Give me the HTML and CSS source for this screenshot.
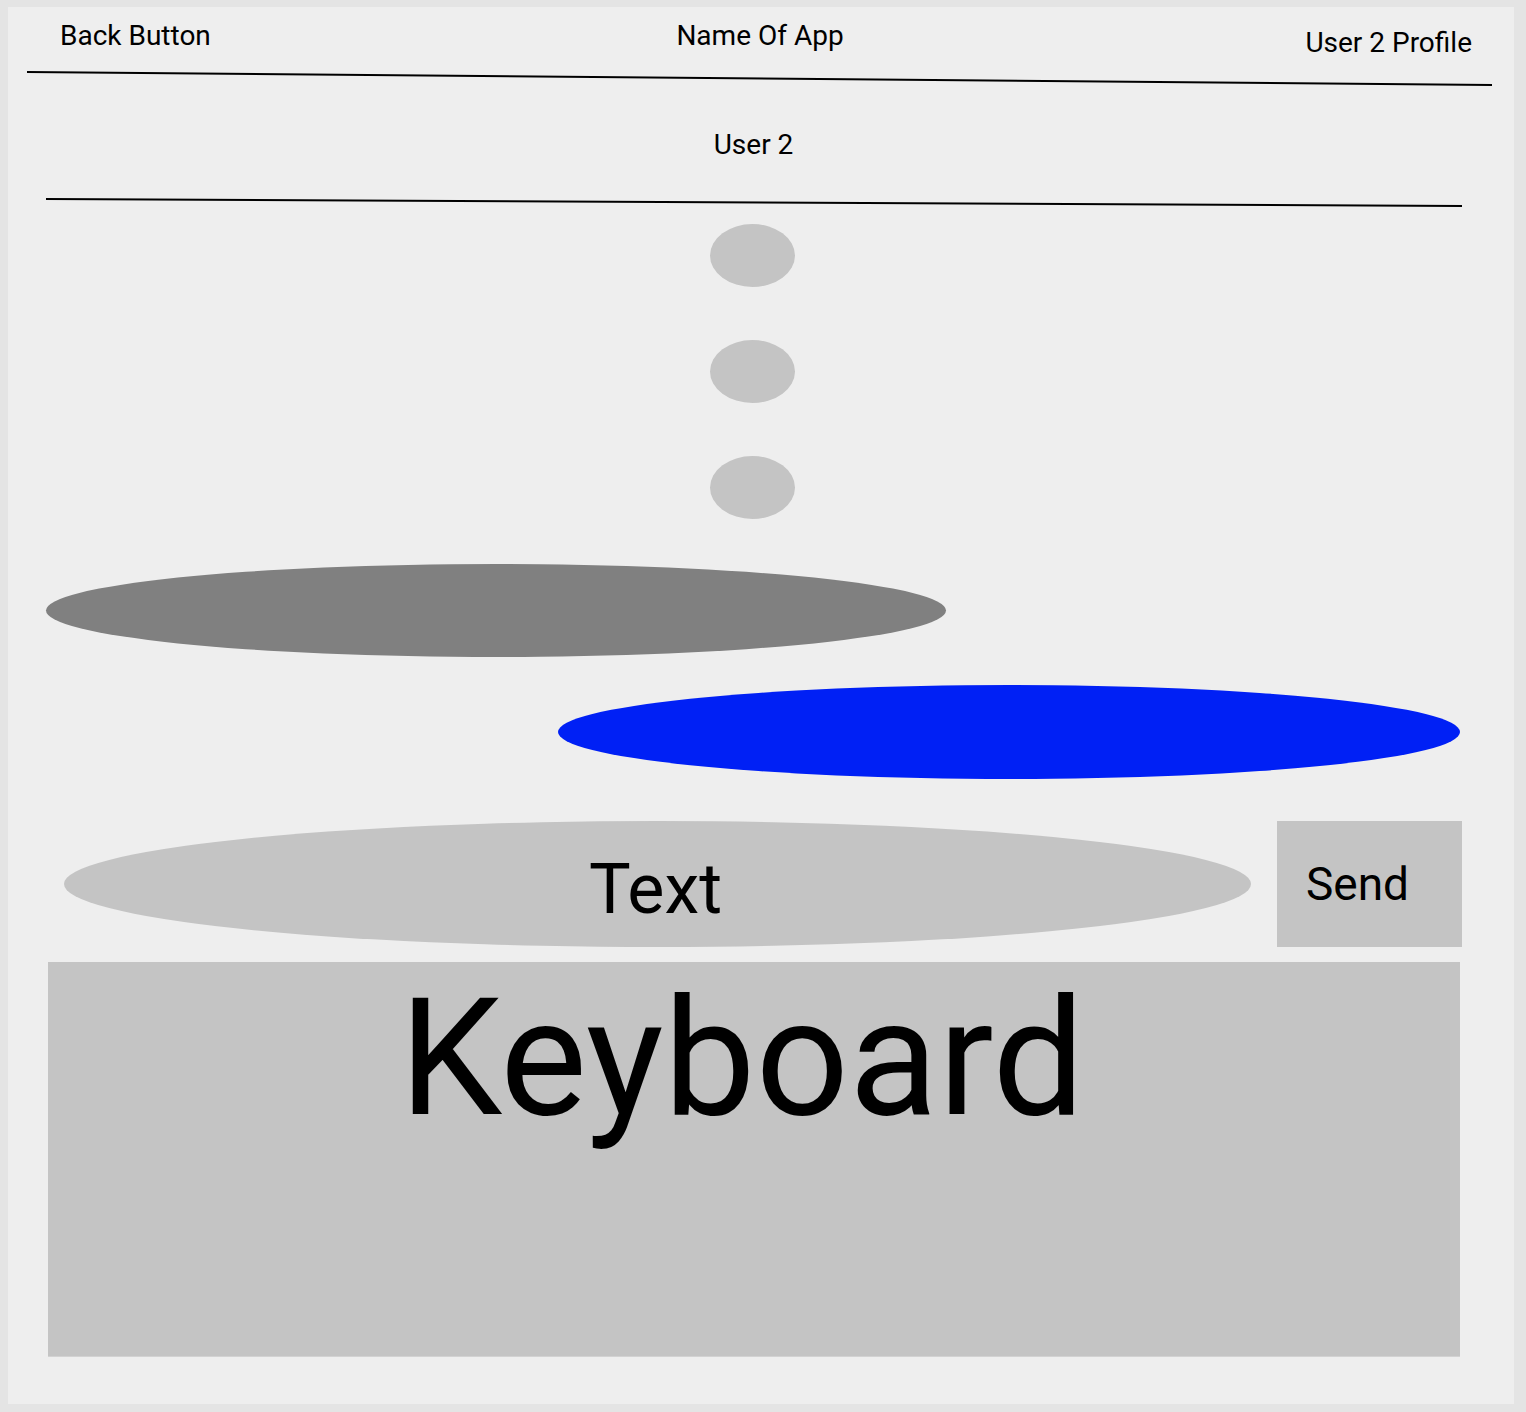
FILE: index.html
```html
<!DOCTYPE html>
<html lang="en">
<head>
<meta charset="utf-8">
<title>Chat Wireframe</title>
<link rel="stylesheet" href="styles.css">
</head>
<body>
<div class="panel">
  <header class="topbar">
    <span class="back">Back Button</span>
    <span class="title">Name Of App</span>
    <span class="profile">User 2 Profile</span>
  </header>
  <svg class="rule rule-top" width="1506" height="24" viewBox="0 0 1506 24">
    <line x1="19" y1="5" x2="1484" y2="18" stroke="#000" stroke-width="2"/>
  </svg>
  <div class="contact">User 2</div>
  <svg class="rule rule-contact" width="1506" height="20" viewBox="0 0 1506 20">
    <line x1="38" y1="6" x2="1454" y2="13" stroke="#000" stroke-width="2"/>
  </svg>
  <div class="dots">
    <div class="dot"></div>
    <div class="dot"></div>
    <div class="dot"></div>
  </div>
  <div class="bubble bubble-in"></div>
  <div class="bubble bubble-out"></div>
  <div class="composer">
    <div class="input"><span>Text</span></div>
    <div class="send">Send</div>
  </div>
  <div class="keyboard">Keyboard</div>
</div>
</body>
</html>
```

FILE: styles.css
```css
html, body {
  margin: 0;
  padding: 0;
  background: #e4e4e4;
}

body {
  width: 1526px;
  height: 1412px;
  overflow: hidden;
  font-family: Roboto, "Liberation Sans", Arial, sans-serif;
  color: #000;
}

.panel {
  margin: 7px 0 0 8px;
  width: 1506px;
  height: 1397px;
  background: #eeeeee;
  display: flex;
  flex-direction: column;
}

.topbar {
  display: grid;
  grid-template-columns: 1fr auto 1fr;
  align-items: start;
  padding: 12px 42px 0 52px;
  height: 48px;
  font-size: 28px;
  line-height: 33px;
}

.back {
  justify-self: start;
}

.title {
  justify-self: center;
  margin-right: 12px;
}

.profile {
  justify-self: end;
  margin-top: 7px;
}

.rule {
  display: block;
  flex: none;
}

.contact {
  margin-top: 37px;
  height: 33px;
  font-size: 28px;
  line-height: 33px;
  text-align: center;
  padding-right: 15px;
}

.rule-contact {
  margin-top: 32px;
}

.dots {
  display: flex;
  flex-direction: column;
  align-items: flex-start;
  gap: 53px;
  margin-top: 11px;
  padding-left: 702px;
}

.dot {
  width: 85px;
  height: 63px;
  border-radius: 50%;
  background: #c4c4c4;
}

.bubble {
  height: 93px;
  border-radius: 50%;
  flex: none;
}

.bubble-in {
  margin-top: 45px;
  margin-left: 38px;
  width: 900px;
  background: #808080;
}

.bubble-out {
  margin-top: 28px;
  margin-left: 550px;
  width: 902px;
  height: 94px;
  background: #0020f5;
}

.composer {
  display: flex;
  align-items: stretch;
  margin-top: 42px;
  margin-left: 56px;
  height: 126px;
}

.input {
  width: 1187px;
  border-radius: 50%;
  background: #c4c4c4;
  display: flex;
  align-items: center;
  justify-content: center;
  font-size: 70px;
  line-height: 82px;
  padding-top: 10px;
  padding-right: 4px;
  box-sizing: border-box;
}

.send {
  margin-left: 26px;
  width: 185px;
  background: #c4c4c4;
  display: flex;
  align-items: center;
  padding-left: 29px;
  box-sizing: border-box;
  font-size: 46px;
}

.keyboard {
  margin-top: 15px;
  margin-left: 40px;
  width: 1412px;
  height: 395px;
  background: #c4c4c4;
  border-bottom: 1px solid #d2d2d2;
  box-sizing: border-box;
  font-size: 164px;
  line-height: 192px;
  text-align: center;
  padding-right: 24px;
}
```
